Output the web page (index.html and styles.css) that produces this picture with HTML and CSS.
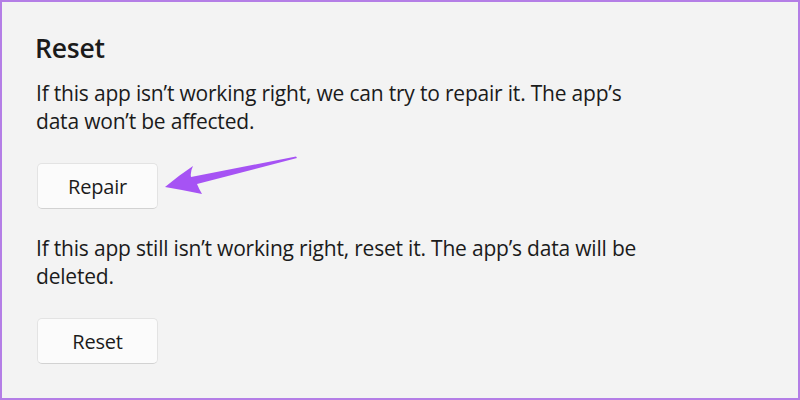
FILE: index.html
```html
<!DOCTYPE html>
<html lang="en">
<head>
<meta charset="utf-8">
<title>Reset</title>
<link rel="stylesheet" href="styles.css">
</head>
<body>
<div class="frame">
  <section class="section">
    <h1 class="title">Reset</h1>
    <p class="desc">If this app isn’t working right, we can try to repair it. The app’s data won’t be affected.</p>
    <button class="btn">Repair</button>
    <p class="desc desc-2">If this app still isn’t working right, reset it. The app’s data will be deleted.</p>
    <button class="btn">Reset</button>
  </section>
  <svg class="arrow" width="800" height="400" viewBox="0 0 800 400" aria-hidden="true">
    <path d="M165,187 Q178,176 193,166 Q190,172 191,177 L296,156.5 L297,158 L197,184 Q199,189 202,194 Q183,190 165,187 Z" fill="#a653f4"/>
  </svg>
</div>
</body>
</html>
```
FILE: styles.css
```css
html, body {
  margin: 0;
  padding: 0;
}
body {
  background: #f3f3f3;
  font-family: "Open Sans", "Noto Sans", sans-serif;
  color: #1b1b1b;
}
.frame {
  position: relative;
  width: 800px;
  height: 400px;
  box-sizing: border-box;
  border: 2px solid #b47ee6;
  background: #f3f3f3;
  overflow: hidden;
}
.section {
  display: flex;
  flex-direction: column;
  align-items: flex-start;
  padding: 28px 0 0 33px;
}
.title {
  margin: 0;
  font-size: 26.5px;
  font-weight: 600;
  line-height: 36px;
  letter-spacing: -0.2px;
}
.desc {
  margin: 13px 0 0 1px;
  max-width: 615px;
  font-size: 21px;
  line-height: 28px;
  letter-spacing: -0.2px;
}
.desc-2 {
  margin-top: 25px;
}
.btn {
  margin: 28px 0 0 2px;
  width: 121px;
  height: 46px;
  box-sizing: border-box;
  background: #fbfbfb;
  border: 1px solid #e3e3e3;
  border-bottom-color: #d2d2d2;
  border-radius: 5px;
  font-family: inherit;
  font-size: 20px;
  color: #1b1b1b;
  letter-spacing: -0.2px;
  padding: 0;
}
.arrow {
  position: absolute;
  left: -2px;
  top: -2px;
  pointer-events: none;
}
```
